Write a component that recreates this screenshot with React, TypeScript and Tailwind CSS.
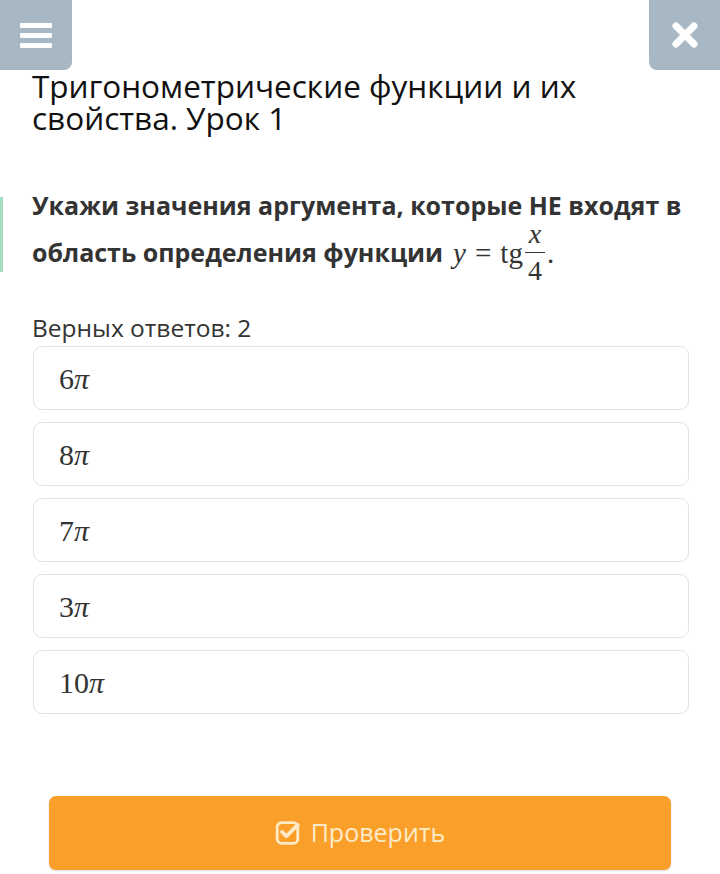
import React from 'react';

const answers = ['6', '8', '7', '3', '10'];

function MenuIcon() {
  return (
    <svg width="32" height="26" viewBox="0 0 32 26" fill="none">
      <rect x="0" y="1" width="32" height="5" rx="1" fill="#fff" />
      <rect x="0" y="11" width="32" height="5" rx="1" fill="#fff" />
      <rect x="0" y="21" width="32" height="5" rx="1" fill="#fff" />
    </svg>
  );
}

function CloseIcon() {
  return (
    <svg width="26" height="26" viewBox="0 0 26 26">
      <path d="M4 4 L22 22 M22 4 L4 22" stroke="#fff" strokeWidth="7" strokeLinecap="round" />
    </svg>
  );
}

function CheckSquareIcon() {
  return (
    <svg width="26" height="26" viewBox="0 0 24 24" fill="none">
      <rect x="2" y="2.5" width="19" height="19" rx="4" stroke="#fdebc8" strokeWidth="2.6" />
      <path d="M6.5 11 L10.5 15 L21 4.5" stroke="#fdebc8" strokeWidth="3.4" strokeLinecap="round" strokeLinejoin="round" />
    </svg>
  );
}

export default function App() {
  const serif = { fontFamily: '"Liberation Serif", "DejaVu Serif", serif' };
  return (
    <div className="relative w-[720px] h-[874px] bg-white overflow-hidden" style={{ fontFamily: '"Open Sans", "Noto Sans", sans-serif' }}>
      <div className="flex justify-between">
        <button className="w-[72px] h-[70px] bg-[#a7b8c4] rounded-br-[8px] flex items-center justify-center">
          <MenuIcon />
        </button>
        <button className="w-[71px] h-[70px] bg-[#a7b8c4] rounded-bl-[8px] flex items-center justify-center">
          <CloseIcon />
        </button>
      </div>

      <h1 className="px-[32px] text-[31.5px] leading-[32px] text-[#111]">
        Тригонометрические функции и их свойства. Урок 1
      </h1>

      <div className="relative mt-[49px] pl-[32px] pr-[20px] text-[25px] font-bold text-[#333]">
        <div className="absolute left-0 top-[14px] w-[3px] h-[75px] bg-[#a6dcc0]" />
        <div className="leading-[45px]">Укажи значения аргумента, которые НЕ входят в</div>
        <div className="flex items-center h-[45px] leading-[45px] mt-[2px]">
          <span>область определения функции</span>
          <span className="flex items-center font-normal ml-[10px] translate-y-[1px]" style={serif}>
            <span className="italic text-[29px]">y</span>
            <span className="text-[29px] mx-[9px]">=</span>
            <span className="text-[29px]">tg</span>
            <span className="flex flex-col items-center mx-[2px] text-[28px] leading-[28px] translate-y-[-1px]">
              <span className="italic">x</span>
              <span className="block w-[20px] h-[1.5px] bg-[#333] my-[4px]" />
              <span>4</span>
            </span>
            <span className="text-[29px]">.</span>
          </span>
        </div>
      </div>

      <div className="px-[32px] mt-[38px] text-[24.5px] leading-[30px] text-[#333]">Верных ответов: 2</div>

      <div className="pl-[33px] pr-[31px] mt-[3px] flex flex-col gap-[12px]">
        {answers.map((n) => (
          <div
            key={n}
            className="h-[64px] border border-[#e3e3e3] rounded-[9px] flex items-center pl-[25px] text-[30px] text-[#333]"
            style={serif}
          >
            <span>{n}</span>
            <span className="italic">π</span>
          </div>
        ))}
      </div>

      <div className="px-[49px] mt-[82px]">
        <button className="w-full h-[74px] bg-[#fb9f2b] rounded-[7px] flex items-center justify-center gap-[10px] text-[25px] text-[#fdebc8] shadow-[0_1px_2px_rgba(0,0,0,0.15)]">
          <CheckSquareIcon />
          <span>Проверить</span>
        </button>
      </div>
    </div>
  );
}
